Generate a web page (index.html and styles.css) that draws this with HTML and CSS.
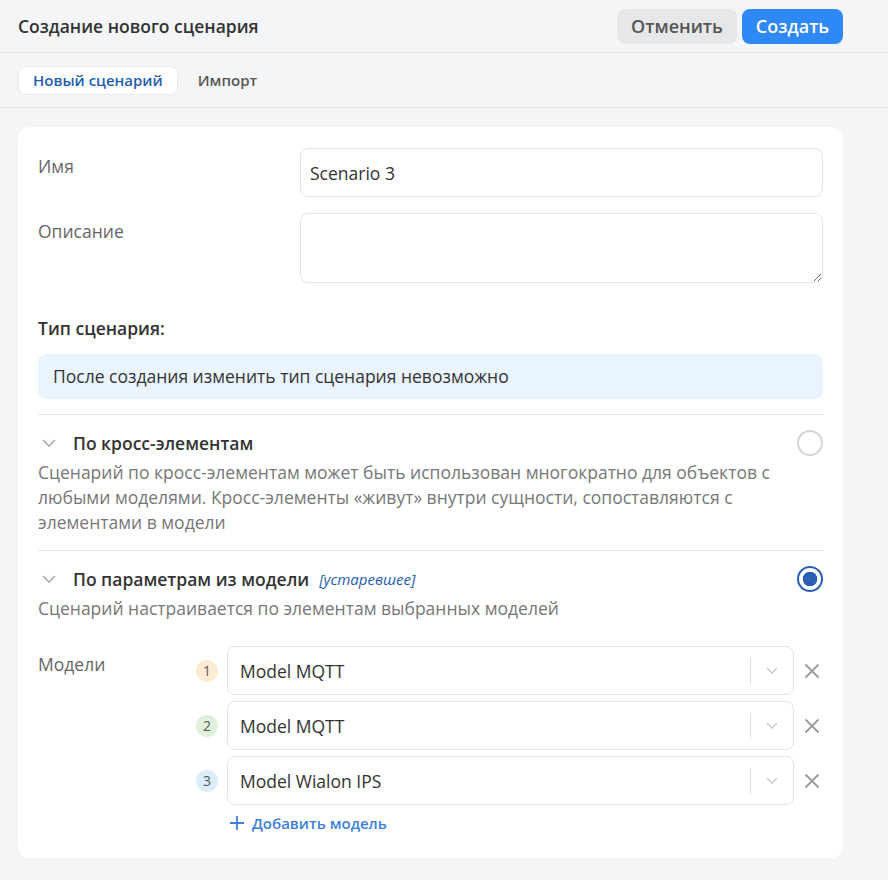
FILE: index.html
```html
<!DOCTYPE html>
<html lang="ru">
<head>
    <meta charset="UTF-8">
    <meta name="viewport" content="width=device-width, initial-scale=1.0">
    <title>Создание нового сценария</title>
    <link rel="stylesheet" href="styles.css">
</head>
<body>
    <header class="top-bar">
        <h1 class="page-title">Создание нового сценария</h1>
        <div class="actions">
            <button class="btn btn-secondary">Отменить</button>
            <button class="btn btn-primary">Создать</button>
        </div>
    </header>

    <nav class="tabs">
        <span class="tab active">Новый сценарий</span>
        <span class="tab">Импорт</span>
    </nav>

    <main class="content">
        <div class="card">
            <div class="form-row">
                <label class="form-label" for="name">Имя</label>
                <input class="text-input" id="name" type="text" value="Scenario 3">
            </div>
            <div class="form-row">
                <label class="form-label" for="desc">Описание</label>
                <textarea class="text-area" id="desc"></textarea>
            </div>

            <h3 class="section-title">Тип сценария:</h3>
            <div class="info-box">После создания изменить тип сценария невозможно</div>

            <div class="option">
                <div class="option-head">
                    <svg class="chevron" width="14" height="8" viewBox="0 0 14 8"><path d="M1 1l6 6 6-6" fill="none" stroke="#a9adb3" stroke-width="1.6"/></svg>
                    <span class="option-title">По кросс-элементам</span>
                    <span class="radio"></span>
                </div>
                <p class="option-desc">Сценарий по кросс-элементам может быть использован многократно для объектов с любыми моделями. Кросс-элементы «живут» внутри сущности, сопоставляются с элементами в модели</p>
            </div>

            <div class="option last">
                <div class="option-head">
                    <svg class="chevron" width="14" height="8" viewBox="0 0 14 8"><path d="M1 1l6 6 6-6" fill="none" stroke="#a9adb3" stroke-width="1.6"/></svg>
                    <span class="option-title">По параметрам из модели</span>
                    <span class="tag">[устаревшее]</span>
                    <span class="radio checked"></span>
                </div>
                <p class="option-desc">Сценарий настраивается по элементам выбранных моделей</p>
            </div>

            <div class="models">
                <span class="form-label">Модели</span>
                <div class="model-list">
                    <div class="model-row">
                        <span class="badge badge-1">1</span>
                        <div class="select">
                            <span class="select-value">Model MQTT</span>
                            <span class="select-sep"></span>
                            <svg class="select-arrow" width="12" height="7" viewBox="0 0 12 7"><path d="M1 1l5 5 5-5" fill="none" stroke="#c4c7cc" stroke-width="1.3"/></svg>
                        </div>
                        <svg class="remove" width="16" height="16" viewBox="0 0 16 16"><path d="M1.5 1.5l13 13M14.5 1.5l-13 13" stroke="#9a9a9a" stroke-width="1.8"/></svg>
                    </div>
                    <div class="model-row">
                        <span class="badge badge-2">2</span>
                        <div class="select">
                            <span class="select-value">Model MQTT</span>
                            <span class="select-sep"></span>
                            <svg class="select-arrow" width="12" height="7" viewBox="0 0 12 7"><path d="M1 1l5 5 5-5" fill="none" stroke="#c4c7cc" stroke-width="1.3"/></svg>
                        </div>
                        <svg class="remove" width="16" height="16" viewBox="0 0 16 16"><path d="M1.5 1.5l13 13M14.5 1.5l-13 13" stroke="#9a9a9a" stroke-width="1.8"/></svg>
                    </div>
                    <div class="model-row">
                        <span class="badge badge-3">3</span>
                        <div class="select">
                            <span class="select-value">Model Wialon IPS</span>
                            <span class="select-sep"></span>
                            <svg class="select-arrow" width="12" height="7" viewBox="0 0 12 7"><path d="M1 1l5 5 5-5" fill="none" stroke="#c4c7cc" stroke-width="1.3"/></svg>
                        </div>
                        <svg class="remove" width="16" height="16" viewBox="0 0 16 16"><path d="M1.5 1.5l13 13M14.5 1.5l-13 13" stroke="#9a9a9a" stroke-width="1.8"/></svg>
                    </div>
                    <a class="add-link" href="#">
                        <svg width="14" height="14" viewBox="0 0 14 14"><path d="M7 0v14M0 7h14" stroke="#3b7fd9" stroke-width="1.8"/></svg>
                        Добавить модель
                    </a>
                </div>
            </div>
        </div>
    </main>
</body>
</html>
```

FILE: styles.css
```css
* {
    box-sizing: border-box;
}

body {
    margin: 0;
    font-family: "Open Sans", "Noto Sans", sans-serif;
    font-size: 17.5px;
    background-color: #f4f5f7;
    color: #333;
}

.top-bar {
    display: flex;
    align-items: center;
    justify-content: space-between;
    height: 53px;
    padding: 0 45px 0 18px;
    border-bottom: 1px solid #e5e7ea;
}

.page-title {
    margin: 0;
    font-size: 17.5px;
    font-weight: 600;
    color: #333;
}

.actions {
    display: flex;
    gap: 5px;
}

.btn {
    height: 35px;
    padding: 0 10px;
    border: none;
    border-radius: 8px;
    font-family: inherit;
    font-size: 18px;
    font-weight: 600;
    cursor: pointer;
}

.btn-secondary {
    width: 120px;
    background-color: #e6e7e9;
    color: #555;
}

.btn-primary {
    width: 101px;
    background-color: #2e88f6;
    color: #fff;
}

.tabs {
    display: flex;
    align-items: center;
    gap: 5px;
    height: 55px;
    padding: 0 18px;
    border-bottom: 1px solid #e5e7ea;
}

.tab {
    padding: 3px 14px 4px;
    border: 1px solid transparent;
    border-radius: 8px;
    font-size: 15px;
    font-weight: 600;
    color: #555;
}

.tab.active {
    background-color: #fff;
    border-color: #e9eaec;
    color: #1f5eae;
}

.content {
    padding: 19px 45px 22px 18px;
}

.card {
    background-color: #fff;
    border-radius: 12px;
    padding: 21px 20px 25px;
}

.form-row {
    display: flex;
    align-items: flex-start;
    margin-bottom: 16px;
}

.form-label {
    width: 262px;
    flex-shrink: 0;
    padding-top: 6px;
    font-size: 17.5px;
    line-height: 24px;
    color: #666;
}

.text-input,
.text-area {
    flex: 1;
    border: 1px solid #e3e4e6;
    border-radius: 8px;
    padding: 0 9px;
    font-family: inherit;
    font-size: 17.5px;
    color: #333;
}

.text-input {
    height: 49px;
}

.text-area {
    height: 70px;
    resize: vertical;
}

.section-title {
    margin: 33px 0 14px;
    font-size: 17.5px;
    font-weight: 600;
    line-height: 24px;
    color: #333;
}

.info-box {
    padding: 10px 15px;
    background-color: #eaf4fe;
    border-radius: 8px;
    font-size: 17.5px;
    line-height: 25px;
    color: #333;
}

.option {
    margin-top: 15px;
    padding: 16px 0 15px;
    border-top: 1px solid #e5e6e8;
}

.option.last {
    margin-top: 0;
}

.option-head {
    display: flex;
    align-items: center;
    height: 23px;
}

.chevron {
    margin: 0 17px 0 4px;
}

.option-title {
    font-size: 17.5px;
    font-weight: 600;
    color: #333;
}

.tag {
    margin-left: 10px;
    font-size: 15px;
    font-style: italic;
    color: #1f5eae;
}

.radio {
    margin-left: auto;
    width: 26px;
    height: 26px;
    border: 2px solid #d2d4d7;
    border-radius: 50%;
}

.radio.checked {
    border-color: #2a5fb3;
    background: radial-gradient(circle, #2a5fb3 0 7px, #fff 7.5px);
}

.option-desc {
    margin: 6px 0 0;
    font-size: 17.5px;
    line-height: 25px;
    color: #777;
}

.models {
    display: flex;
    align-items: flex-start;
    margin-top: 10px;
}

.models .form-label {
    width: 158px;
    padding-top: 6px;
}

.model-list {
    flex: 1;
    display: flex;
    flex-direction: column;
    gap: 6px;
}

.model-row {
    display: flex;
    align-items: center;
}

.badge {
    display: flex;
    align-items: center;
    justify-content: center;
    width: 22px;
    height: 22px;
    margin-right: 9px;
    border-radius: 50%;
    font-size: 14px;
    color: #555;
}

.badge-1 {
    background-color: #fdebd4;
}

.badge-2 {
    background-color: #dff0db;
}

.badge-3 {
    background-color: #dcedfa;
}

.select {
    flex: 1;
    display: flex;
    align-items: center;
    height: 49px;
    padding: 0 15px 0 12px;
    border: 1px solid #e3e4e6;
    border-radius: 8px;
}

.select-value {
    flex: 1;
    font-size: 17.5px;
    color: #333;
}

.select-sep {
    width: 1px;
    height: 26px;
    background-color: #dcdde0;
    margin-right: 15px;
}

.remove {
    margin: 0 3px 0 10px;
}

.add-link {
    display: flex;
    align-items: center;
    gap: 8px;
    margin: 2px 0 0 34px;
    font-size: 15px;
    font-weight: 600;
    color: #3b7fd9;
    text-decoration: none;
}
```
